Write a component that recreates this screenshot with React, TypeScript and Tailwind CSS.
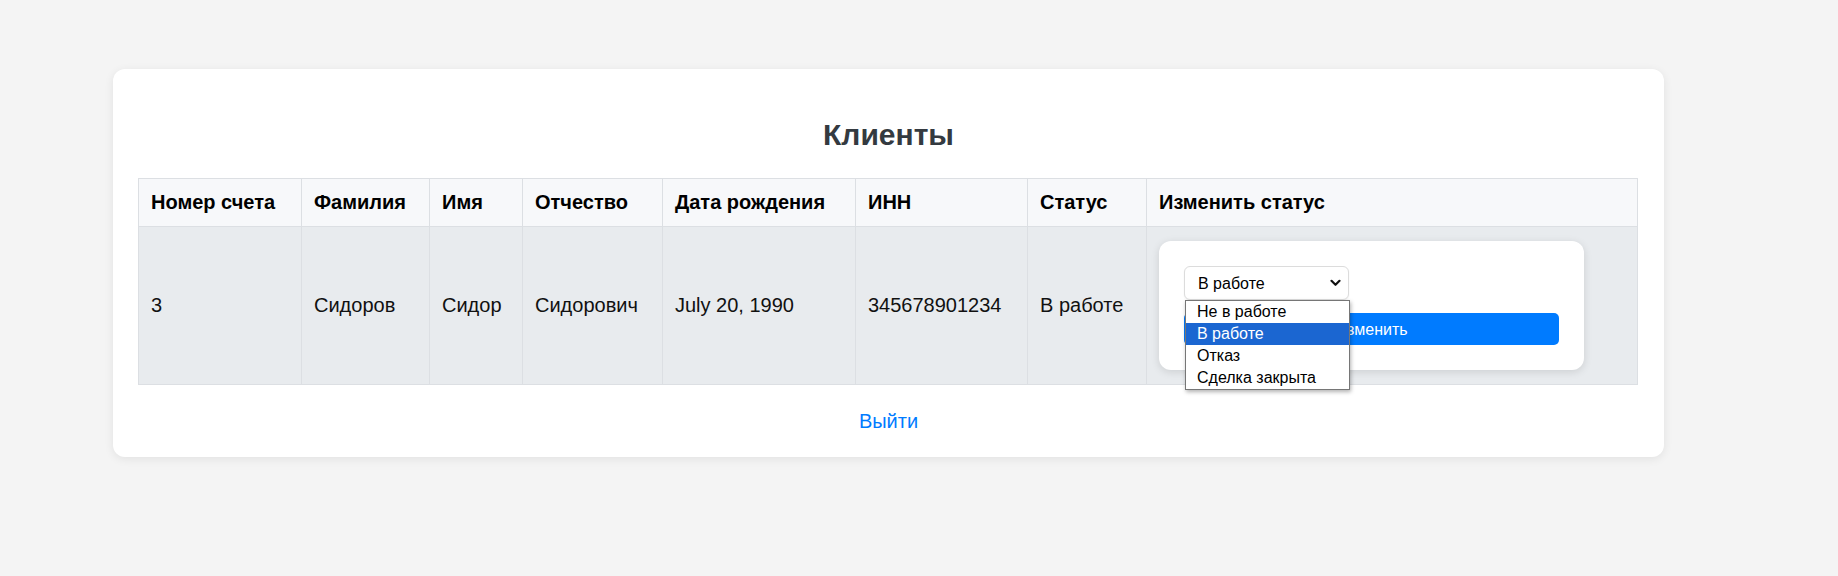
const columns = [
  { title: "Номер счета", width: "w-[163px]" },
  { title: "Фамилия", width: "w-[128px]" },
  { title: "Имя", width: "w-[93px]" },
  { title: "Отчество", width: "w-[140px]" },
  { title: "Дата рождения", width: "w-[193px]" },
  { title: "ИНН", width: "w-[172px]" },
  { title: "Статус", width: "w-[119px]" },
  { title: "Изменить статус", width: "w-[491px]" },
];

const client = ["3", "Сидоров", "Сидор", "Сидорович", "July 20, 1990", "345678901234", "В работе"];

const statuses = ["Не в работе", "В работе", "Отказ", "Сделка закрыта"];

const Chevron = () => (
  <svg width="11" height="8" viewBox="0 0 11 8" fill="none" className="shrink-0">
    <path d="M1.5 1.8 5.5 5.8 9.5 1.8" stroke="#111" strokeWidth="2.2" strokeLinecap="round" strokeLinejoin="round" />
  </svg>
);

const StatusForm = () => {
  return (
    <div className="w-[425px] bg-white rounded-[12px] shadow-[0_2px_8px_rgba(0,0,0,0.12)] p-[25px] flex flex-col gap-[13px]">
      {/* select with its open list */}
      <div className="relative w-[165px]">
        <div className="h-[34px] flex items-center justify-between pl-[13px] pr-[7px] bg-white border border-[#dcdcdc] rounded-[6px] shadow-[0_1px_2px_rgba(0,0,0,0.05)] text-[16px] text-black">
          <span>В работе</span>
          <Chevron />
        </div>
        <ul className="absolute left-[1px] top-[34px] w-[165px] bg-white border border-[#767676] shadow-[1px_2px_4px_rgba(0,0,0,0.3)] z-10">
          {statuses.map((s) => (
            <li
              key={s}
              className={
                s === "В работе"
                  ? "h-[22px] leading-[22px] pl-[11px] text-[16px] bg-[#1b66d1] text-white"
                  : "h-[22px] leading-[22px] pl-[11px] text-[16px] text-black"
              }
            >
              {s}
            </li>
          ))}
        </ul>
      </div>
      <button className="h-[32px] w-full rounded-[5px] bg-[#007bff] text-white text-[16px]">Изменить</button>
    </div>
  );
};

const App = () => {
  return (
    <div className="min-h-[576px] bg-[#f4f4f4] pt-[69px] font-['Liberation_Sans',Arial,sans-serif]">
      <div className="ml-[113px] w-[1551px] bg-white rounded-[12px] shadow-[0_2px_10px_rgba(0,0,0,0.08)] px-[25px] pt-[25px] pb-[24px]">
        <h2 className="mt-[24px] mb-[26px] text-center text-[30px] font-bold leading-[34px] text-[#343a40]">Клиенты</h2>

        <table className="table-fixed border-collapse w-[1500px] text-[20px] leading-[23px] text-[#111]">
          <colgroup>
            {columns.map((c) => (
              <col key={c.title} className={c.width} />
            ))}
          </colgroup>
          <thead>
            <tr className="bg-[#f7f8fa]">
              {columns.map((c) => (
                <th key={c.title} className="border border-[#dcdfe3] px-3 py-3 text-left font-bold text-black">
                  {c.title}
                </th>
              ))}
            </tr>
          </thead>
          <tbody>
            <tr className="bg-[#e8ebee]">
              {client.map((v, i) => (
                <td key={i} className="border border-[#dcdfe3] px-3 align-middle">
                  {v}
                </td>
              ))}
              <td className="border border-[#dcdfe3] px-3 pt-[14px] pb-[14px] align-middle">
                <StatusForm />
              </td>
            </tr>
          </tbody>
        </table>

        <div className="mt-[25px] text-center text-[20px] leading-[23px]">
          <a href="#" className="text-[#007bff]">Выйти</a>
        </div>
      </div>
    </div>
  );
};

export default App;
